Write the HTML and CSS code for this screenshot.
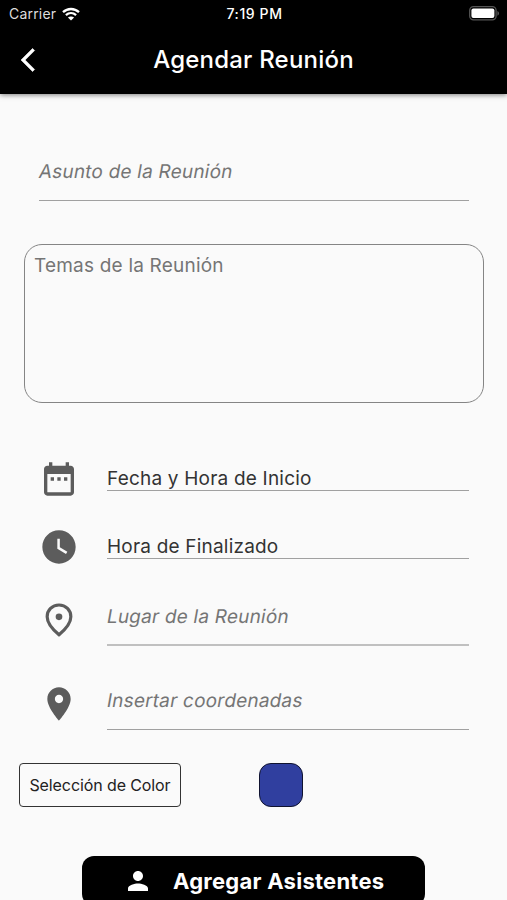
FILE: index.html
```html
<!DOCTYPE html>
<html lang="es">
<head>
    <meta charset="UTF-8">
    <title>Agendar Reunión</title>
    <link rel="stylesheet" href="styles.css">
</head>
<body>
    <header class="header">
        <div class="status">
            <div class="carrier">
                <span class="carrier-name">Carrier</span>
                <svg class="wifi" viewBox="0 0 18 14">
                    <path d="M1 5.2C5.6.9 12.4.9 17 5.2M3.9 8.2c3-2.7 7.2-2.7 10.2 0" fill="none" stroke="#fff" stroke-width="2.3"/>
                    <path d="M9 13.6l-3.1-3.1c1.8-1.5 4.4-1.5 6.2 0z" fill="#fff"/>
                </svg>
            </div>
            <span class="clock">7:19 PM</span>
            <svg class="battery" viewBox="0 0 31 15">
                <rect x=".7" y=".7" width="26.4" height="13.1" rx="3.8" fill="none" stroke="#555" stroke-width="1.3"/>
                <rect x="2.4" y="2.5" width="23" height="9.5" rx="2" fill="#fff"/>
                <path d="M28.4 5c2.2.8 2.2 3.9 0 4.7z" fill="#555"/>
            </svg>
        </div>
        <div class="bar">
            <svg class="back" viewBox="0 0 24 24"><path d="M11.67 3.87L9.9 2.1 0 12l9.9 9.9 1.77-1.77L3.54 12z"/></svg>
            <h1>Agendar Reunión</h1>
        </div>
    </header>

    <main class="form">
        <div class="field subject"><span class="hint">Asunto de la Reunión</span></div>
        <div class="topics"><span>Temas de la Reunión</span></div>

        <div class="row row-start">
            <svg class="icon" viewBox="0 0 24 24"><path d="M9 11H7v2h2v-2zm4 0h-2v2h2v-2zm4 0h-2v2h2v-2zm2-7h-1V2h-2v2H8V2H6v2H5c-1.11 0-1.99.9-1.99 2L3 20c0 1.1.89 2 2 2h14c1.1 0 2-.9 2-2V6c0-1.1-.9-2-2-2zm0 16H5V9h14v11z"/></svg>
            <div class="field value"><span>Fecha y Hora de Inicio</span></div>
        </div>
        <div class="row row-end">
            <svg class="icon" viewBox="0 0 24 24"><path d="M12 2C6.5 2 2 6.5 2 12s4.5 10 10 10 10-4.5 10-10S17.5 2 12 2zm4.2 14.2L11 13V7h1.5v5.2l4.5 2.7-.8 1.3z"/></svg>
            <div class="field value"><span>Hora de Finalizado</span></div>
        </div>
        <div class="row row-place">
            <svg class="icon" viewBox="0 0 24 24">
                <path d="M12 3C7.9 3 4.9 6.1 4.9 10c0 4.3 4.1 8.3 7.1 10.8 3-2.5 7.1-6.5 7.1-10.8C19.1 6.1 16.1 3 12 3z" fill="none" stroke="#5c5c5c" stroke-width="1.9"/>
                <circle cx="12" cy="10.1" r="2"/>
            </svg>
            <div class="field"><span class="hint">Lugar de la Reunión</span></div>
        </div>
        <div class="row row-coords">
            <svg class="icon" viewBox="0 0 24 24"><path d="M12 2C8.13 2 5 5.13 5 9c0 5.25 7 13 7 13s7-7.75 7-13c0-3.87-3.13-7-7-7zm0 9.5c-1.38 0-2.5-1.12-2.5-2.5s1.12-2.5 2.5-2.5 2.5 1.12 2.5 2.5-1.12 2.5-2.5 2.5z"/></svg>
            <div class="field"><span class="hint">Insertar coordenadas</span></div>
        </div>

        <div class="color-row">
            <button class="color-button" type="button"><span>Selección de Color</span></button>
            <div class="swatch"></div>
        </div>

        <button class="add-button" type="button">
            <svg class="person" viewBox="0 0 24 24"><path d="M12 12c2.21 0 4-1.79 4-4s-1.79-4-4-4-4 1.79-4 4 1.79 4 4 4zm0 2c-2.67 0-8 1.34-8 4v2h16v-2c0-2.66-5.33-4-8-4z"/></svg>
            <span>Agregar Asistentes</span>
        </button>
    </main>
</body>
</html>
```
FILE: styles.css
```css
* {
    box-sizing: border-box;
}
body {
    margin: 0;
    height: 900px;
    overflow: hidden;
    display: flex;
    flex-direction: column;
    font-family: Inter, "Liberation Sans", sans-serif;
    font-size: 19px;
    letter-spacing: 0.2px;
    background-color: #fafafa;
    color: #333;
}
svg {
    display: block;
    flex: none;
}
span {
    white-space: nowrap;
}
.header {
    flex: none;
    height: 94px;
    background: #000;
    color: #fff;
    box-shadow: 0 1px 5px rgba(0,0,0,0.5);
}
.status {
    height: 27px;
    display: grid;
    grid-template-columns: 1fr auto 1fr;
    align-items: center;
    padding: 0 7px 0 9px;
    font-size: 14px;
    line-height: 27px;
}
.carrier {
    display: flex;
    align-items: center;
    gap: 6px;
    color: #ddd;
}
.clock {
    font-weight: 500;
    letter-spacing: 0.6px;
}
.wifi {
    width: 18px;
    height: 14px;
}
.battery {
    width: 31px;
    height: 15px;
    justify-self: end;
}
.bar {
    height: 66px;
    display: grid;
    grid-template-columns: 60px 1fr 60px;
    align-items: center;
}
.back {
    width: 28px;
    height: 28px;
    margin-left: 21px;
    fill: #fff;
    stroke: #fff;
    stroke-width: 0.5;
}
h1 {
    margin: 0;
    font-size: 24px;
    font-weight: 500;
    line-height: 30px;
    text-align: center;
}
.form {
    flex: 1;
    min-height: 0;
    display: flex;
    flex-direction: column;
}
.field {
    flex: 1;
    border-bottom: 1px solid #a0a0a0;
    line-height: 26px;
}
/* slanted upright face, keeps the two-storey "a" */
.hint {
    display: inline-block;
    color: #757575;
    transform: skewX(-10deg);
}
.subject {
    flex: none;
    height: 42px;
    margin: 65px 38px 0 39px;
}
.topics {
    flex: none;
    height: 159px;
    margin: 43px 23px 0 24px;
    padding: 8px 9px;
    border: 1px solid #858585;
    border-radius: 18px;
    color: #757575;
    line-height: 26px;
}
.row {
    flex: none;
    display: flex;
    align-items: center;
    gap: 28.5px;
    margin: 0 38px 0 38.5px;
    height: 40px;
}
.icon {
    width: 40px;
    height: 40px;
    fill: #5c5c5c;
}
.row-start {
    margin-top: 56px;
}
.row-end {
    margin-top: 28px;
}
.row-place {
    margin-top: 33px;
}
.row-coords {
    margin-top: 44px;
}
.row .field {
    height: 42px;
    align-self: flex-start;
    margin-top: 4px;
}
.row .value {
    height: 25px;
    margin-top: 7px;
}
.row-place .field {
    border-bottom: 2px solid #c0c0c0;
}
.color-row {
    flex: none;
    display: flex;
    align-items: center;
    gap: 78px;
    margin: 39px 0 0 19px;
}
.color-button {
    width: 162px;
    height: 44px;
    padding: 0;
    border: 1px solid #333;
    border-radius: 4px;
    background: #fafafa;
    font-family: inherit;
    font-size: 16px;
    letter-spacing: -0.1px;
    color: #222;
}
.swatch {
    width: 44px;
    height: 44px;
    border: 1px solid #10132f;
    border-radius: 12px;
    background: #303f9f;
}
.add-button {
    flex: none;
    align-self: center;
    display: flex;
    align-items: center;
    gap: 20px;
    width: 343px;
    height: 50px;
    margin-top: 49px;
    padding: 0 0 0 41px;
    border: 0;
    border-radius: 12px;
    background: #000;
    font-family: inherit;
    font-size: 22px;
    font-weight: 700;
    letter-spacing: 0.25px;
    color: #fff;
}
.person {
    width: 30px;
    height: 30px;
    fill: #fff;
}
```
